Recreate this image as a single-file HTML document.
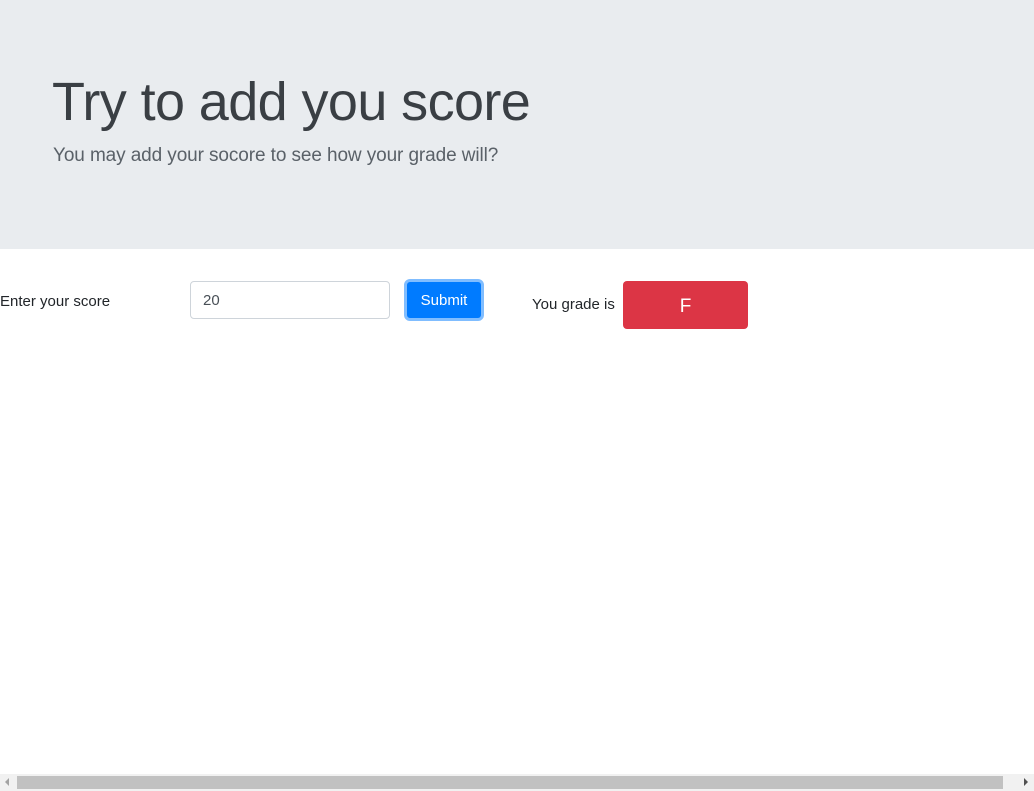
<!DOCTYPE html>
<html><head><meta charset="utf-8"><style>
body{margin:0;width:1034px;height:791px;overflow:hidden;font-family:"Liberation Sans",sans-serif;color:#212529;background:#fff;position:relative}
.jum{position:absolute;left:0;top:0;width:1034px;height:249px;background:#e9ecef}
h1{position:absolute;left:52px;top:67px;margin:0;font-size:54px;font-weight:300;line-height:70px;letter-spacing:-0.6px;color:#3a3f44}
.lead{position:absolute;left:53px;top:145px;font-size:19px;font-weight:300;color:#5a6168;letter-spacing:-0.1px}
.t{position:absolute;font-size:15px}
.inp{position:absolute;left:190px;top:281px;width:200px;height:38px;border:1px solid #ced4da;border-radius:4px;box-sizing:border-box;font-size:15px;color:#495057;padding:10px 12px}
.btn{position:absolute;left:404px;top:279px;width:80px;height:42px;box-sizing:border-box;border:3px solid #80bdff;border-radius:6px;background:#007bff;color:#fff;font-size:15px;text-align:center;line-height:38px}
.f{position:absolute;left:623px;top:281px;width:125px;height:48px;background:#dc3545;border-radius:4px;color:#fff;font-size:19px;text-align:center;line-height:52px}
.sb{position:absolute;left:0;top:774px;width:1034px;height:17px;background:#f1f1f1}
.th{position:absolute;left:17px;top:776px;width:986px;height:13px;background:#c1c1c1}
</style></head><body>
<div class="jum"><h1>Try to add you score</h1><div class="lead">You may add your socore to see how your grade will?</div></div>
<div class="t" style="left:0;top:293px">Enter your score</div>
<div class="inp">20</div>
<div class="btn">Submit</div>
<div class="t" style="left:532px;top:296px">You grade is</div>
<div class="f">F</div>
<div class="sb"></div><div class="th"></div>
<div style="position:absolute;left:5px;top:778px;width:0;height:0;border-top:4px solid transparent;border-bottom:4px solid transparent;border-right:4px solid #a3a3a3"></div>
<div style="position:absolute;left:1024px;top:778px;width:0;height:0;border-top:4px solid transparent;border-bottom:4px solid transparent;border-left:4px solid #505050"></div>
</body></html>
